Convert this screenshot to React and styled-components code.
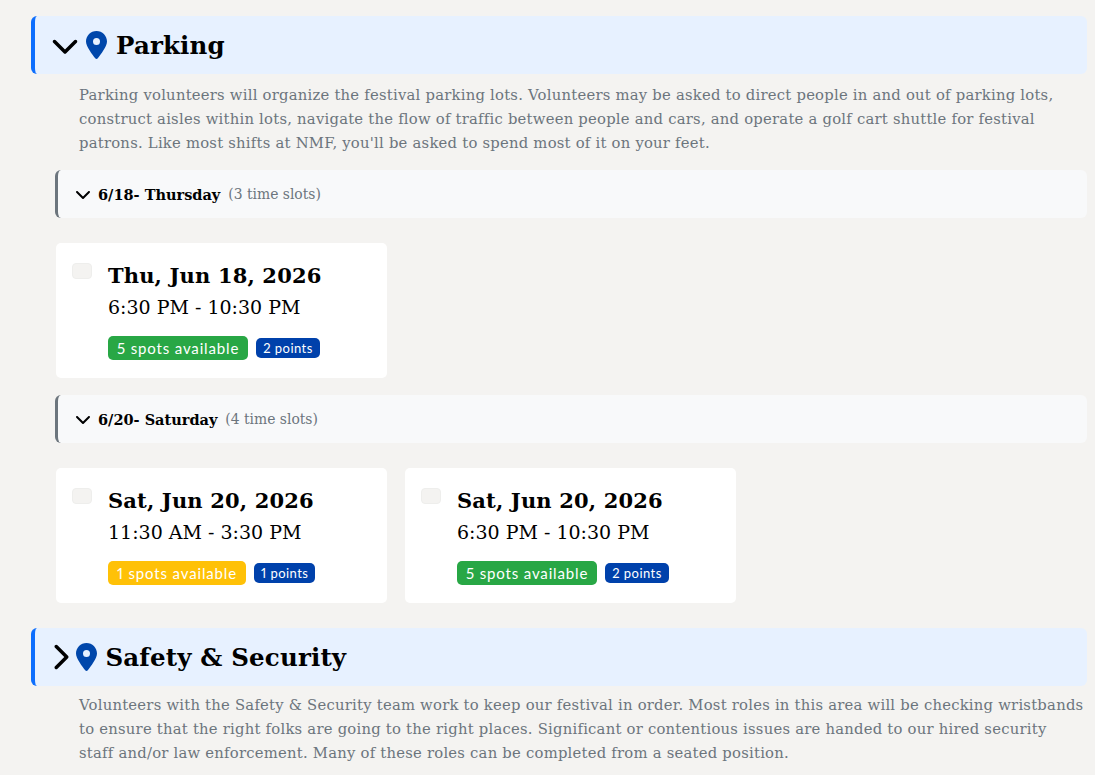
import React from "react";
import styled, { createGlobalStyle } from "styled-components";
import { FaChevronDown, FaChevronRight, FaLocationDot } from "react-icons/fa6";

const GlobalStyle = createGlobalStyle`
  html, body {
    margin: 0;
    height: 100%;
    overflow: hidden;
    background: #f4f3f1;
    font-family: "DejaVu Serif", "Liberation Serif", serif;
    color: #000;
  }
`;

const Page = styled.main`
  padding: 16px 8px 0 31px;
`;

const Section = styled.section`
  margin-bottom: 25px;
`;

const SectionHeader = styled.header`
  display: flex;
  align-items: center;
  height: 58px;
  box-sizing: border-box;
  padding-left: 16px;
  background: #e7f1ff;
  border-left: 4px solid #0d6efd;
  border-radius: 6px;
`;

const OpenChevron = styled(FaChevronDown)`
  width: 28px;
  height: 28px;
  flex: none;
`;

const ClosedChevron = styled(FaChevronRight)`
  width: 17.5px;
  height: 28px;
  flex: none;
`;

const Pin = styled(FaLocationDot)`
  width: 21px;
  height: 28px;
  margin: 0 9px 0 7px;
  color: #0047ab;
  flex: none;
`;

const SectionTitle = styled.h2`
  margin: 0;
  font-size: 24.5px;
  font-weight: 700;
  letter-spacing: 0.15px;
`;

const Description = styled.p`
  margin: ${(p) => (p.$tight ? 7 : 9)}px 3px 0 48px;
  font-size: 14.8px;
  letter-spacing: 0.23px;
  line-height: 24px;
  color: #6c757d;
`;

const Day = styled.div`
  margin: 17px 0 0 24px;

  ${Description} + & {
    margin-top: 15px;
  }
`;

const DayHeader = styled.div`
  display: flex;
  align-items: center;
  height: 48px;
  box-sizing: border-box;
  padding-left: 17px;
  background: #f8f9fa;
  border-left: 3px solid #6c757d;
  border-radius: 6px;
`;

const DayChevron = styled(FaChevronDown)`
  font-size: 16px;
  flex: none;
  margin-right: 7px;
`;

const DayTitle = styled.strong`
  font-size: 14.5px;
  font-weight: 700;
`;

const SlotCount = styled.span`
  margin-left: 8px;
  font-size: 13.9px;
  color: #6c757d;
`;

const Slots = styled.div`
  display: flex;
  gap: 18px;
  margin: 25px 0 0 1px;
`;

const Card = styled.article`
  display: flex;
  width: 331px;
  height: 135px;
  box-sizing: border-box;
  padding: 20px 16px;
  background: #fff;
  border-radius: 5px;
`;

const Check = styled.input.attrs({ type: "checkbox" })`
  appearance: none;
  width: 20px;
  height: 16px;
  margin: 0 16px 0 0;
  flex: none;
  background: #f4f3f1;
  border: 1px solid #eeeeec;
  border-radius: 4px;
`;

const CardBody = styled.div`
  display: flex;
  flex-direction: column;
  align-items: flex-start;
`;

const CardDate = styled.div`
  font-size: 21px;
  font-weight: 700;
  letter-spacing: 0.15px;
  line-height: 26px;
`;

const CardTime = styled.div`
  margin-top: 6px;
  font-size: 19px;
  line-height: 24px;
`;

const Badges = styled.div`
  display: flex;
  align-items: center;
  gap: 8px;
  margin-top: 17px;
`;

const Badge = styled.span`
  display: flex;
  align-items: center;
  height: ${(p) => (p.$small ? 20 : 24)}px;
  padding: 0 ${(p) => (p.$small ? 7 : 9)}px;
  border-radius: 5px;
  background: ${(p) => p.$bg};
  color: #fff;
  font-family: "Lato", "Open Sans", sans-serif;
  font-size: ${(p) => (p.$small ? 13 : 15)}px;
  font-variant-numeric: proportional-nums;
  letter-spacing: ${(p) => (p.$small ? 0.45 : 0.85)}px;
  white-space: nowrap;
`;

const days = [
  {
    title: "6/18- Thursday",
    count: 3,
    slots: [
      { date: "Thu, Jun 18, 2026", time: "6:30 PM - 10:30 PM", spots: 5, points: 2 },
    ],
  },
  {
    title: "6/20- Saturday",
    count: 4,
    slots: [
      { date: "Sat, Jun 20, 2026", time: "11:30 AM - 3:30 PM", spots: 1, points: 1 },
      { date: "Sat, Jun 20, 2026", time: "6:30 PM - 10:30 PM", spots: 5, points: 2 },
    ],
  },
];

function SlotCard({ slot }) {
  return (
    <Card>
      <Check />
      <CardBody>
        <CardDate>{slot.date}</CardDate>
        <CardTime>{slot.time}</CardTime>
        <Badges>
          <Badge $bg={slot.spots > 1 ? "#28a745" : "#ffc107"}>{slot.spots} spots available</Badge>
          <Badge $small $bg="#0041ab">{slot.points} points</Badge>
        </Badges>
      </CardBody>
    </Card>
  );
}

export default function App() {
  return (
    <Page>
      <GlobalStyle />
      <Section>
        <SectionHeader>
          <OpenChevron />
          <Pin />
          <SectionTitle>Parking</SectionTitle>
        </SectionHeader>
        <Description>
          Parking volunteers will organize the festival parking lots. Volunteers may be asked to direct people in and out of parking lots, construct aisles within lots, navigate the flow of traffic between people and cars, and operate a golf cart shuttle for festival patrons. Like most shifts at NMF, you'll be asked to spend most of it on your feet.
        </Description>
        {days.map((day) => (
          <Day key={day.title}>
            <DayHeader>
              <DayChevron />
              <DayTitle>{day.title}</DayTitle>
              <SlotCount>({day.count} time slots)</SlotCount>
            </DayHeader>
            <Slots>
              {day.slots.map((slot) => (
                <SlotCard key={slot.time} slot={slot} />
              ))}
            </Slots>
          </Day>
        ))}
      </Section>
      <Section>
        <SectionHeader>
          <ClosedChevron />
          <Pin />
          <SectionTitle>Safety &amp; Security</SectionTitle>
        </SectionHeader>
        <Description $tight>
          Volunteers with the Safety &amp; Security team work to keep our festival in order. Most roles in this area will be checking wristbands to ensure that the right folks are going to the right places. Significant or contentious issues are handed to our hired security staff and/or law enforcement. Many of these roles can be completed from a seated position.
        </Description>
      </Section>
    </Page>
  );
}
